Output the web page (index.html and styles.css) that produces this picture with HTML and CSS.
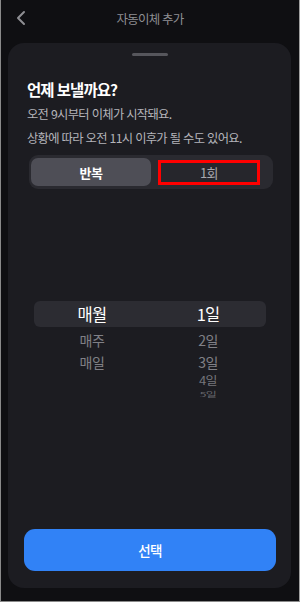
FILE: index.html
```html
<!DOCTYPE html>
<html lang="ko">
<head>
<meta charset="utf-8">
<link rel="stylesheet" href="styles.css">
</head>
<body>
<div class="frame">
  <header class="topbar">
    <svg class="back" width="12" height="16" viewBox="0 0 12 16"><path d="M9 2 L3 8 L9 14" fill="none" stroke="#8e8e93" stroke-width="2" stroke-linecap="round" stroke-linejoin="round"/></svg>
    <div class="topbar-title">자동이체 추가</div>
  </header>
  <section class="sheet">
    <div class="handle"></div>
    <div class="content">
      <h1 class="title">언제 보낼까요?</h1>
      <p class="desc">오전 9시부터 이체가 시작돼요.<br>상황에 따라 오전 11시 이후가 될 수도 있어요.</p>
      <div class="segment">
        <div class="seg-btn active">반복</div>
        <div class="seg-btn outlined">1회</div>
      </div>
    </div>
    <div class="picker">
      <div class="band"></div>
      <div class="col">
        <div class="item sel">매월</div>
        <div class="item r1">매주</div>
        <div class="item r2">매일</div>
      </div>
      <div class="col">
        <div class="item sel">1일</div>
        <div class="item r1">2일</div>
        <div class="item r2">3일</div>
        <div class="item r3">4일</div>
        <div class="item r4">5일</div>
      </div>
    </div>
    <div class="footer">
      <button class="cta">선택</button>
    </div>
  </section>
</div>
</body>
</html>
```
FILE: styles.css
```css
* { box-sizing: border-box; margin: 0; padding: 0; }
html, body { width: 300px; height: 602px; background: #0f0f12; }
body { font-family: "Noto Sans CJK KR", "Noto Sans", sans-serif; }
.frame {
  width: 300px; height: 602px;
  background: #0f0f12;
  border-left: 1px solid #8a8a8a;
  border-right: 1px solid #a0a0a0;
  border-bottom: 1px solid #8a8a8a;
  display: flex; flex-direction: column;
}
.topbar {
  height: 43px; position: relative;
  display: flex; align-items: center; justify-content: center;
}
.back { position: absolute; left: 14px; top: 10px; }
.topbar-title { color: #8e8e93; font-size: 12.5px; letter-spacing: -0.8px; margin-top: -6px; }
.sheet {
  margin: 0 8px 0 7px;
  height: 545px;
  background: #1c1c21;
  border-radius: 16px;
  display: flex; flex-direction: column;
  position: relative;
}
.handle {
  width: 36px; height: 3px; border-radius: 2px;
  background: #56565c;
  margin: 10px auto 0;
}
.content { padding: 0 18px 0 19px; }
.title {
  color: #ffffff; font-size: 15.5px; font-weight: 700; letter-spacing: -1px;
  margin-top: 21px; line-height: 24px;
}
.desc {
  color: #b4b4ba; font-size: 12.3px; letter-spacing: -0.7px; line-height: 24px;
  margin-top: 1px;
}
.segment {
  margin-top: 5px; margin-left: 2px; margin-right: 0;
  height: 34px;
  background: #2a2a30;
  border-radius: 9px;
  padding: 3px 3px 3px 2px;
  display: flex; gap: 6px;
}
.seg-btn {
  display: flex; align-items: center; justify-content: center;
  font-size: 13px; letter-spacing: -0.5px; color: #b0b0b6;
  border-radius: 7px;
}
.seg-btn.active { flex: none; width: 120px; background: #4e4e56; color: #ffffff; font-weight: 700; }
.seg-btn.outlined {
  flex: 1;
  border: 3px solid #ff0000; border-radius: 0;
  background: #26262c;
  margin: 2px 10px 1px 1px;
  color: #a8a8ae;
}
.picker {
  position: relative;
  margin-top: 112px;
  display: grid; grid-template-columns: 1fr 1fr;
  padding: 0 25px 0 26px;
}
.band {
  position: absolute; left: 26px; right: 25px; top: 0; height: 26px;
  background: #2c2c32; border-radius: 6px;
}
.col {
  position: relative;
  display: flex; flex-direction: column; align-items: center;
}
.col:first-child { padding-right: 36px; }
.item { color: #808086; font-size: 14px; letter-spacing: -0.5px; line-height: 22px; }
.item.sel { color: #ffffff; font-size: 16.5px; letter-spacing: -0.8px; line-height: 26px; margin-bottom: 2px; }
.item.r3 { font-size: 13px; line-height: 16px; transform: scaleY(0.85); color: #76767c; }
.item.r4 { font-size: 12px; line-height: 10px; transform: scaleY(0.55); color: #66666c; }
.footer {
  margin-top: auto;
  padding: 0 15px 17px 16px;
}
.cta {
  width: 100%; height: 42px;
  border: none; border-radius: 11px;
  background: #3182f6; color: #ffffff;
  font-family: inherit; font-size: 13.5px; letter-spacing: -0.6px; font-weight: 500;
}
```
